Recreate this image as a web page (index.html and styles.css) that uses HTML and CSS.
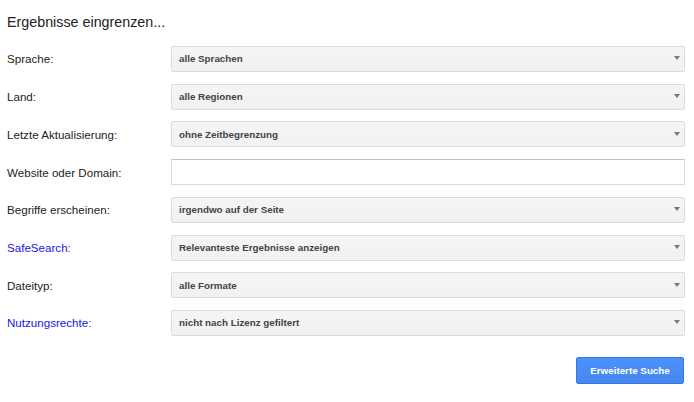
FILE: index.html
```html
<!DOCTYPE html>
<html lang="de">
<head>
<meta charset="utf-8">
<title>Erweiterte Suche</title>
<link rel="stylesheet" href="styles.css">
</head>
<body>
<div class="page">
  <h1 class="title">Ergebnisse eingrenzen...</h1>
  <div class="form">
    <div class="row">
      <span class="label">Sprache:</span>
      <div class="select"><span>alle Sprachen</span><i class="arrow"></i></div>
    </div>
    <div class="row">
      <span class="label">Land:</span>
      <div class="select"><span>alle Regionen</span><i class="arrow"></i></div>
    </div>
    <div class="row">
      <span class="label">Letzte Aktualisierung:</span>
      <div class="select"><span>ohne Zeitbegrenzung</span><i class="arrow"></i></div>
    </div>
    <div class="row">
      <span class="label">Website oder Domain:</span>
      <input class="text-input" type="text" value="">
    </div>
    <div class="row">
      <span class="label">Begriffe erscheinen:</span>
      <div class="select"><span>irgendwo auf der Seite</span><i class="arrow"></i></div>
    </div>
    <div class="row">
      <a class="label link" href="#">SafeSearch<span class="colon">:</span></a>
      <div class="select"><span>Relevanteste Ergebnisse anzeigen</span><i class="arrow"></i></div>
    </div>
    <div class="row">
      <span class="label">Dateityp:</span>
      <div class="select"><span>alle Formate</span><i class="arrow"></i></div>
    </div>
    <div class="row">
      <a class="label link" href="#">Nutzungsrechte<span class="colon">:</span></a>
      <div class="select"><span>nicht nach Lizenz gefiltert</span><i class="arrow"></i></div>
    </div>
  </div>
  <div class="actions">
    <button class="btn" type="button">Erweiterte Suche</button>
  </div>
</div>
</body>
</html>
```
FILE: styles.css
```css
* { box-sizing: border-box; }
html, body {
  margin: 0;
  padding: 0;
  background: #fff;
}
body {
  font-family: "Liberation Sans", Arial, sans-serif;
  color: #222;
}
.page {
  width: 694px;
  padding: 0 9px 0 7px;
}
.title {
  margin: 13.6px 0 0;
  font-size: 14.3px;
  line-height: 17px;
  font-weight: normal;
  color: #222;
}
.form {
  margin-top: 15.4px;
  display: flex;
  flex-direction: column;
  gap: 11.71px;
}
.row {
  display: flex;
  align-items: center;
  height: 26px;
}
.label {
  width: 164px;
  flex: none;
  font-size: 11.6px;
  color: #222;
  text-decoration: none;
}
.link {
  color: #1a14e6;
}
.link .colon {
  color: #4a4ab0;
}
.select {
  flex: 1;
  height: 26px;
  display: flex;
  align-items: center;
  justify-content: space-between;
  padding: 0 4px 0 7px;
  background: linear-gradient(#f5f5f5, #f1f1f1);
  border: 1px solid #dcdcdc;
  border-radius: 2px;
  font-size: 9.8px;
  font-weight: bold;
  color: #444;
}
.arrow {
  width: 0;
  height: 0;
  border-left: 3.5px solid transparent;
  border-right: 3.5px solid transparent;
  border-top: 4px solid #777;
  margin-top: -1px;
}
.text-input {
  flex: 1;
  height: 26px;
  margin: 0;
  padding: 0 7px;
  border: 1px solid #d9d9d9;
  border-top-color: #c0c0c0;
  border-radius: 1px;
  background: #fff;
  font-family: inherit;
  font-size: 11.6px;
  outline: none;
}
.actions {
  display: flex;
  justify-content: flex-end;
  margin-top: 21px;
  padding-right: 1px;
}
.btn {
  width: 108px;
  height: 27px;
  margin: 0;
  padding: 0;
  background: linear-gradient(#4d90fe, #4787ed);
  border: 1px solid #3079ed;
  border-radius: 2px;
  color: #fff;
  font-family: inherit;
  font-size: 9.8px;
  font-weight: bold;
  cursor: pointer;
}
```
